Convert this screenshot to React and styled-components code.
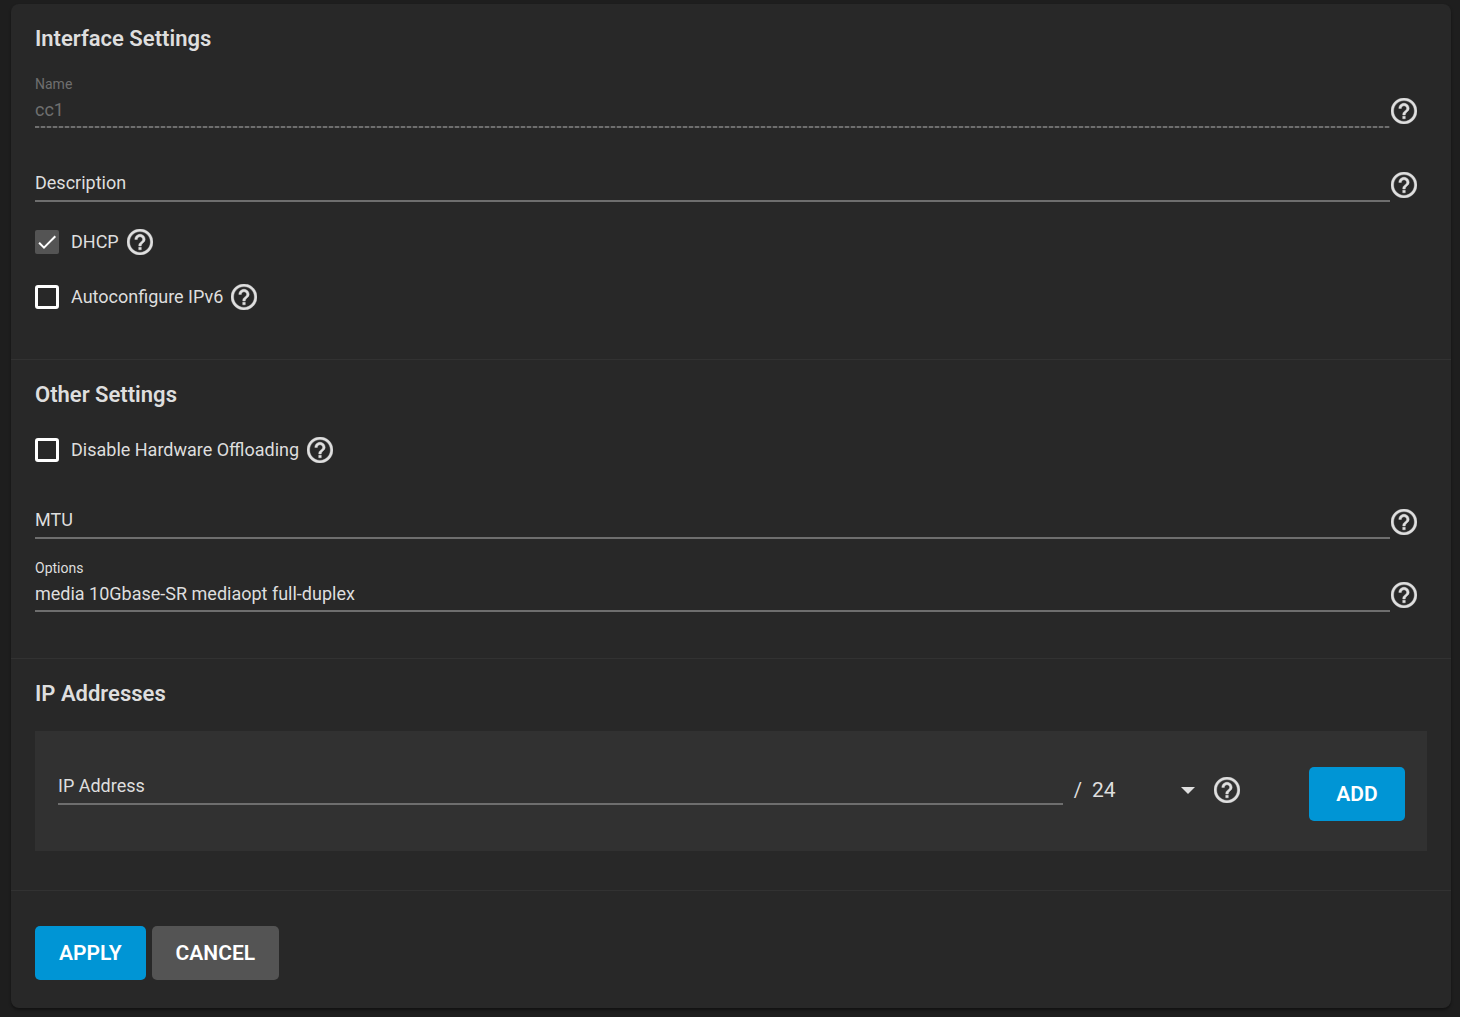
import { useState } from 'react';
import styled, { createGlobalStyle } from 'styled-components';

function HelpButton({ topic }) {
  return (
    <HelpIcon type="button" aria-label={`Help: ${topic}`}>
      <svg viewBox="2 2 20 20" width="26" height="26" fill="currentColor">
        <path
          d="M11 18h2v-2h-2v2zm1-16C6.48 2 2 6.48 2 12s4.48 10 10 10 10-4.48 10-10S17.52 2 12 2zm0 18c-4.41 0-8-3.59-8-8s3.59-8 8-8 8 3.59 8 8-3.59 8-8 8zm0-14c-2.21 0-4 1.79-4 4h2c0-1.1.9-2 2-2s2 .9 2 2c0 2-3 1.75-3 5h2c0-2.25 3-2.5 3-5 0-2.21-1.79-4-4-4z"
          stroke="currentColor"
          strokeWidth="0.3"
        />
      </svg>
    </HelpIcon>
  );
}

function TextField({ id, label, initial = '', disabled = false }) {
  const [value, setValue] = useState(initial);

  return (
    <Field>
      <FieldLabel htmlFor={id} $floating={value !== ''} $disabled={disabled}>
        {label}
      </FieldLabel>
      <FieldInput
        id={id}
        type="text"
        value={value}
        disabled={disabled}
        onChange={(e) => setValue(e.target.value)}
      />
    </Field>
  );
}

function Checkbox({ id, label, checked = false }) {
  return (
    <CheckRow>
      <CheckLabel htmlFor={id}>
        <CheckBox id={id} type="checkbox" defaultChecked={checked} />
        <CheckMark viewBox="0 0 24 24" aria-hidden="true">
          <path d="M4.1 12.7 9 17.6 20.3 6.3" />
        </CheckMark>
        <span>{label}</span>
      </CheckLabel>
      <HelpButton topic={label} />
    </CheckRow>
  );
}

function App() {
  const netmasks = Array.from({ length: 32 }, (_, i) => i + 1);

  return (
    <>
      <GlobalStyle />
      <Card onSubmit={(e) => e.preventDefault()}>
        <Section $bottom={49}>
          <Heading>Interface Settings</Heading>
          <Fields $gap={20}>
            <FieldRow>
              <TextField id="name" label="Name" initial="cc1" disabled />
              <HelpButton topic="Name" />
            </FieldRow>
            <FieldRow>
              <TextField id="description" label="Description" />
              <HelpButton topic="Description" />
            </FieldRow>
          </Fields>
          <Checks $top={27}>
            <Checkbox id="dhcp" label="DHCP" checked />
            <Checkbox id="ipv6" label="Autoconfigure IPv6" />
          </Checks>
        </Section>

        <Section $bottom={46}>
          <Heading>Other Settings</Heading>
          <Checks $top={7} $bottom={22}>
            <Checkbox id="offloading" label="Disable Hardware Offloading" />
          </Checks>
          <Fields $gap={19}>
            <FieldRow>
              <TextField id="mtu" label="MTU" />
              <HelpButton topic="MTU" />
            </FieldRow>
            <FieldRow>
              <TextField
                id="options"
                label="Options"
                initial="media 10Gbase-SR mediaopt full-duplex"
              />
              <HelpButton topic="Options" />
            </FieldRow>
          </Fields>
        </Section>

        <Section $bottom={39}>
          <Heading>IP Addresses</Heading>
          <AddressPanel>
            <AddressGroup>
              <TextField id="address" label="IP Address" />
              <Slash>/</Slash>
              <SelectWrap>
                <Netmask aria-label="Netmask" defaultValue="24">
                  {netmasks.map((n) => (
                    <option key={n} value={n}>
                      {n}
                    </option>
                  ))}
                </Netmask>
                <Arrow viewBox="0 0 14 7" aria-hidden="true">
                  <path d="M0 0h14L7 7z" />
                </Arrow>
              </SelectWrap>
              <HelpButton topic="IP Address" />
            </AddressGroup>
            <AddButton type="button" $primary>
              ADD
            </AddButton>
          </AddressPanel>
        </Section>

        <Actions>
          <Button type="submit" $primary>
            APPLY
          </Button>
          <Button type="button">CANCEL</Button>
        </Actions>
      </Card>
    </>
  );
}

export default App;

const GlobalStyle = createGlobalStyle`
  * {
    box-sizing: border-box;
  }

  body {
    margin: 0;
    padding: 4px 9px 9px 11px;
    background: #1e1e1e;
    color: #dedede;
    font-family: Roboto, 'Liberation Sans', sans-serif;
    font-size: 18px;
  }

  button,
  input,
  select {
    font-family: inherit;
    color: inherit;
  }
`;

const Card = styled.form`
  background: #282828;
  border-radius: 8px;
  box-shadow: 0 2px 3px rgba(0, 0, 0, 0.4);
`;

const Section = styled.section`
  padding: 20px 24px ${(p) => p.$bottom}px;
  border-bottom: 1px solid #323232;
`;

const Heading = styled.h2`
  margin: 0 0 20px;
  font-size: 22px;
  font-weight: 600;
  line-height: 30px;
`;

const Fields = styled.div`
  display: flex;
  flex-direction: column;
  gap: ${(p) => p.$gap}px;
`;

const HelpIcon = styled.button`
  flex: none;
  display: flex;
  padding: 0;
  border: 0;
  background: none;
  color: #dfdfdf;
  cursor: pointer;
`;

const FieldRow = styled.div`
  display: flex;
  align-items: flex-end;
  gap: 1px;
  padding-right: 10px;

  ${HelpIcon} {
    margin-bottom: 4px;
  }
`;

const Field = styled.div`
  flex: 1;
  min-width: 0;
  display: grid;
  grid-template-rows: 20px 34px;
`;

// an empty field shows its label on the input line
const FieldLabel = styled.label`
  grid-column: 1;
  grid-row: ${(p) => (p.$floating ? 1 : 2)};
  font-size: ${(p) => (p.$floating ? 14 : 18)}px;
  line-height: ${(p) => (p.$floating ? 20 : 30)}px;
  color: ${(p) => (p.$disabled ? '#6f6f6f' : 'inherit')};
`;

const FieldInput = styled.input`
  grid-column: 1;
  grid-row: 2;
  width: 100%;
  padding: 0 0 2px;
  border: 0;
  border-bottom: 2px solid #6e6e6e;
  border-radius: 0;
  outline: 0;
  background: transparent;
  font-size: 18px;

  &:disabled {
    color: #6f6f6f;
    border-bottom-color: transparent;
    background: repeating-linear-gradient(
        90deg,
        #6e6e6e 0 4px,
        #3c3c3c 4px 6px
      )
      bottom / 100% 2px no-repeat border-box;
  }
`;

const Checks = styled.div`
  display: flex;
  flex-direction: column;
  gap: 29px;
  padding: ${(p) => p.$top}px 0 ${(p) => p.$bottom || 0}px;
`;

const CheckRow = styled.div`
  display: flex;
  align-items: center;
  gap: 8px;
`;

const CheckLabel = styled.label`
  display: grid;
  grid-template-columns: 24px auto;
  align-items: center;
  column-gap: 12px;
  line-height: 20px;

  > span {
    grid-row: 1;
    grid-column: 2;
  }
`;

const CheckBox = styled.input`
  appearance: none;
  grid-area: 1 / 1;
  width: 24px;
  height: 24px;
  margin: 0;
  border: 3px solid #fff;
  border-radius: 3px;

  &:checked {
    border: 0;
    border-radius: 2px;
    background: #545454;
  }
`;

const CheckMark = styled.svg`
  grid-area: 1 / 1;
  width: 24px;
  height: 24px;
  fill: none;
  stroke: #fff;
  stroke-width: 2;
  pointer-events: none;
  visibility: hidden;

  ${CheckBox}:checked + & {
    visibility: visible;
  }
`;

const AddressPanel = styled.div`
  display: flex;
  align-items: center;
  margin-top: 22px;
  padding: 0 22px 0 23px;
  background: #313131;
`;

const AddressGroup = styled.div`
  flex: 1;
  min-width: 0;
  display: flex;
  align-items: flex-end;
  padding: 20px 0 46px;

  ${HelpIcon} {
    margin-bottom: 2px;
  }
`;

const Slash = styled.span`
  margin: 0 10px 2px 11px;
  font-size: 20px;
  line-height: 26px;
`;

const SelectWrap = styled.div`
  display: grid;
  align-items: center;
  width: 103px;
  margin: 0 19px 2px 0;
`;

const Netmask = styled.select`
  appearance: none;
  grid-area: 1 / 1;
  width: 100%;
  height: 26px;
  padding: 0;
  border: 0;
  outline: 0;
  background: transparent;
  font-size: 21px;

  option {
    background: #313131;
  }
`;

const Arrow = styled.svg`
  grid-area: 1 / 1;
  justify-self: end;
  width: 14px;
  height: 7px;
  fill: #dfdfdf;
  pointer-events: none;
`;

const Button = styled.button`
  height: 54px;
  padding: 0 24px;
  border: 0;
  border-radius: 5px;
  background: ${(p) => (p.$primary ? '#0095d5' : '#545454')};
  color: #fff;
  font-size: 21px;
  font-weight: 600;
  cursor: pointer;
`;

const AddButton = styled(Button)`
  min-width: 96px;
  margin: 6px 0 0 69px;
`;

const Actions = styled.div`
  display: flex;
  gap: 6px;
  padding: 35px 24px 28px;
`;
